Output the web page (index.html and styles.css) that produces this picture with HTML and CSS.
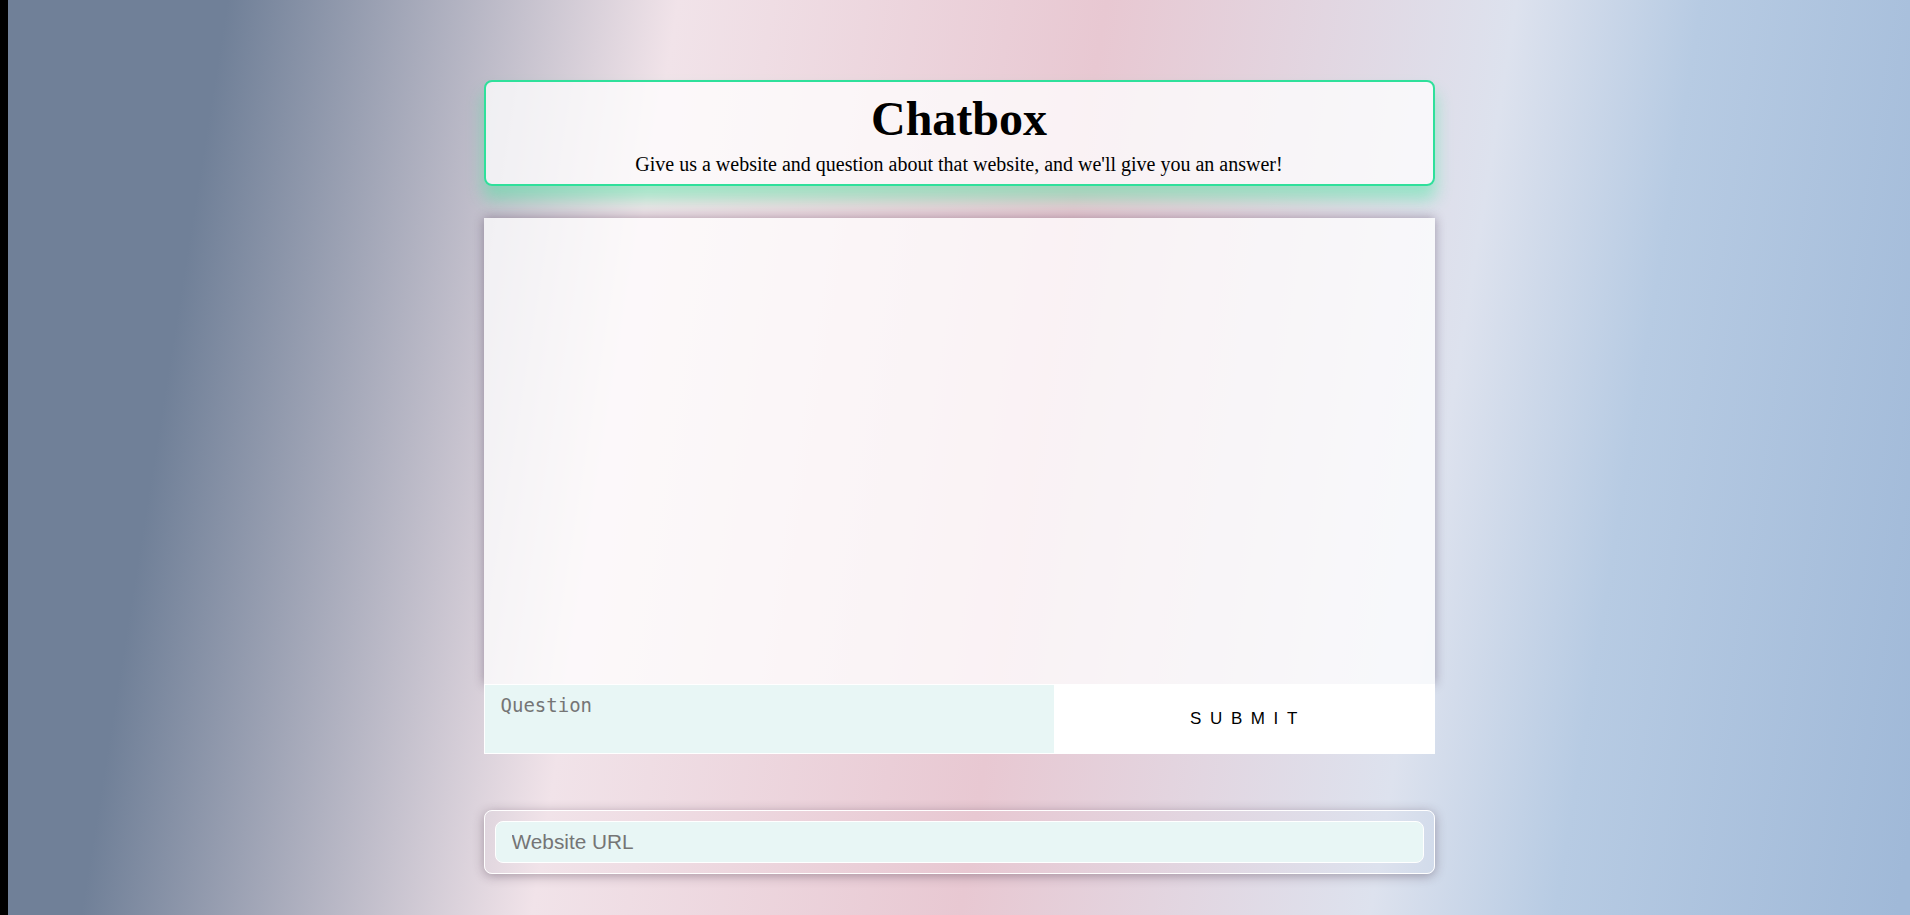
FILE: index.html
```html
<!DOCTYPE html>
<html lang="en">
<head>
<meta charset="utf-8">
<title>Chatbox</title>
<link rel="stylesheet" href="styles.css">
</head>
<body>
<main class="page">
  <header class="intro">
    <h1 class="intro-title">Chatbox</h1>
    <p class="intro-text">Give us a website and question about that website, and we'll give you an answer!</p>
  </header>
  <section class="messages"></section>
  <form class="ask">
    <textarea class="ask-input" placeholder="Question"></textarea>
    <button class="ask-submit" type="button">SUBMIT</button>
  </form>
  <div class="site">
    <input class="site-input" type="text" placeholder="Website URL">
  </div>
</main>
</body>
</html>
```
FILE: styles.css
```css
* { box-sizing: border-box; }
html { background: #000; }
body { margin: 0; padding-left: 8px; height: 100vh; overflow: hidden; }
.page {
  height: 100%;
  padding-top: 80px;
  display: flex;
  flex-direction: column;
  align-items: center;
  background: linear-gradient(99.1deg, #708098 0, #708098 217px, #f1e3e9 662px, #e8c8d2 1085px, #dde2ee 1490px, #b7cbe3 1672px, #a0b9d8 2010px);
}
.intro, .messages, .ask, .site { width: 951px; flex: none; }
.intro {
  height: 106px;
  padding-top: 9px;
  border: 2px solid #2fe09b;
  border-radius: 8px;
  background: rgba(255, 255, 255, .76);
  box-shadow: 0 13px 16px 1px rgba(47, 235, 150, .4);
  font-family: "Liberation Serif", "Times New Roman", serif;
  text-align: center;
  color: #000;
}
.intro-title { margin: 0; font-size: 48px; line-height: 55px; }
.intro-text { margin: 6px 0 0; font-size: 20px; line-height: 24px; }
.messages {
  height: 466px;
  margin-top: 32px;
  background: rgba(255, 255, 255, .76);
  box-shadow: 0 0 10px rgba(60, 40, 70, .4);
}
.ask { height: 70px; display: flex; position: relative; }
.ask-input {
  width: 571px;
  height: 70px;
  padding: 9px 16px;
  border: 1px solid #fff;
  border-radius: 0;
  outline: 0;
  resize: none;
  background: #e8f6f5;
  font: 19px/23px "DejaVu Sans Mono", monospace;
}
.ask-input::placeholder, .site-input::placeholder { color: #757575; opacity: 1; }
.ask-submit {
  flex: 1;
  padding: 0 0 0 7px;
  border: 0;
  background: #fff;
  color: #000;
  font: 17px "Liberation Sans", Arial, sans-serif;
  letter-spacing: 8.6px;
}
.site {
  height: 64px;
  margin-top: 56px;
  padding: 10px;
  border: 1px solid #fff;
  border-radius: 8px;
  box-shadow: 0 2px 11px rgba(60, 40, 60, .38);
}
.site-input {
  display: block;
  width: 100%;
  height: 42px;
  padding: 0 16px;
  border: 1px solid #fff;
  border-radius: 8px;
  outline: 0;
  background: #e8f6f5;
  font: 20.8px "Liberation Sans", Arial, sans-serif;
}
```
